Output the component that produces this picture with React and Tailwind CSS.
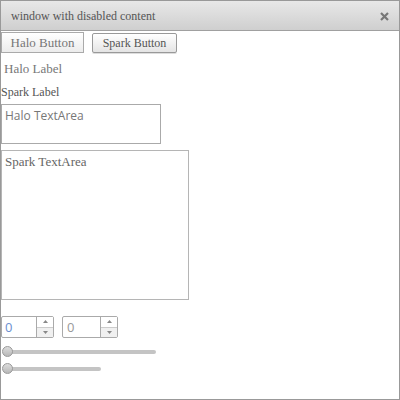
export default function App() {
  return (
    <div className="w-[400px] h-[400px] border border-[#999] bg-white flex flex-col">
      <div className="h-[30px] shrink-0 flex items-center justify-between pl-[10px] pr-[10px] border-b border-[#a0a0a0] bg-gradient-to-b from-[#e8e8e8] to-[#cfcfcf]">
        <span className="font-['Liberation_Serif',serif] text-[12px] text-[#555]">window with disabled content</span>
        <svg width="9" height="9" viewBox="0 0 9 9" className="mt-[1px]">
          <path d="M1 1 L8 8 M8 1 L1 8" stroke="#777" strokeWidth="2.2" />
        </svg>
      </div>
      <div className="flex flex-col font-['Liberation_Serif',serif]">
        <div className="flex items-start gap-[8px] mt-[1px]">
          <div className="w-[83px] h-[21px] border border-[#aaa] bg-gradient-to-b from-[#fff] to-[#ececec] flex items-center justify-center text-[13px] text-[#777]">Halo Button</div>
          <div className="w-[85px] h-[20px] mt-[1px] rounded-[2px] border border-[#999] bg-gradient-to-b from-[#fff] to-[#e4e4e4] flex items-center justify-center text-[12px] text-[#555] shadow-[0_1px_0_#ddd]">Spark Button</div>
        </div>
        <div className="ml-[3px] mt-[7px] h-[18px] text-[13px] text-[#777] leading-[18px]">Halo Label</div>
        <div className="mt-[7px] h-[15px] text-[12px] text-[#555] leading-[15px]">Spark Label</div>
        <div className="mt-[4px] w-[160px] h-[40px] border border-[#aaa] pl-[3px] pt-[2px] font-['Open_Sans',sans-serif] text-[12px] text-[#777] leading-[17px]">Halo TextArea</div>
        <div className="mt-[6px] w-[188px] h-[150px] border border-[#b5b5b5] pl-[3px] pt-[3px] text-[13px] text-[#666] leading-[16px]">Spark TextArea</div>
        <div className="flex gap-[8px] mt-[16px]">
          <div className="flex w-[53px] h-[22px] border border-[#aaa] rounded-[2px]">
            <div className="w-[34px] pl-[3px] text-[13px] leading-[20px] text-[#6b8fd0] font-['Open_Sans',sans-serif]">0</div>
            <div className="flex-1 flex flex-col border-l border-[#aaa]">
              <div className="flex-1 flex items-center justify-center bg-white border-b border-[#ccc]">
                <svg width="5" height="3" viewBox="0 0 5 3"><path d="M0 3 L2.5 0 L5 3 Z" fill="#888" /></svg>
              </div>
              <div className="flex-1 flex items-center justify-center bg-[#f0f0f0]">
                <svg width="5" height="3" viewBox="0 0 5 3"><path d="M0 0 L5 0 L2.5 3 Z" fill="#888" /></svg>
              </div>
            </div>
          </div>
          <div className="flex w-[56px] h-[22px] border border-[#aaa] rounded-[2px]">
            <div className="w-[37px] pl-[4px] text-[13px] leading-[20px] text-[#999] font-['Open_Sans',sans-serif]">0</div>
            <div className="flex-1 flex flex-col border-l border-[#aaa]">
              <div className="flex-1 flex items-center justify-center bg-white border-b border-[#ccc]">
                <svg width="5" height="3" viewBox="0 0 5 3"><path d="M0 3 L2.5 0 L5 3 Z" fill="#888" /></svg>
              </div>
              <div className="flex-1 flex items-center justify-center bg-[#f0f0f0]">
                <svg width="5" height="3" viewBox="0 0 5 3"><path d="M0 0 L5 0 L2.5 3 Z" fill="#888" /></svg>
              </div>
            </div>
          </div>
        </div>
        <div className="relative mt-[8px] h-[12px] w-[155px]">
          <div className="absolute left-[3px] right-0 top-[4px] h-[4px] rounded-[2px] bg-[#c4c4c4]" />
          <div className="absolute left-[1px] top-0 w-[11px] h-[11px] rounded-full border border-[#999] bg-gradient-to-b from-[#ddd] to-[#b8b8b8]" />
        </div>
        <div className="relative mt-[5px] h-[12px] w-[100px]">
          <div className="absolute left-[3px] right-0 top-[4px] h-[4px] rounded-[2px] bg-[#c4c4c4]" />
          <div className="absolute left-[1px] top-0 w-[11px] h-[11px] rounded-full border border-[#999] bg-gradient-to-b from-[#ddd] to-[#b8b8b8]" />
        </div>
      </div>
    </div>
  );
}
